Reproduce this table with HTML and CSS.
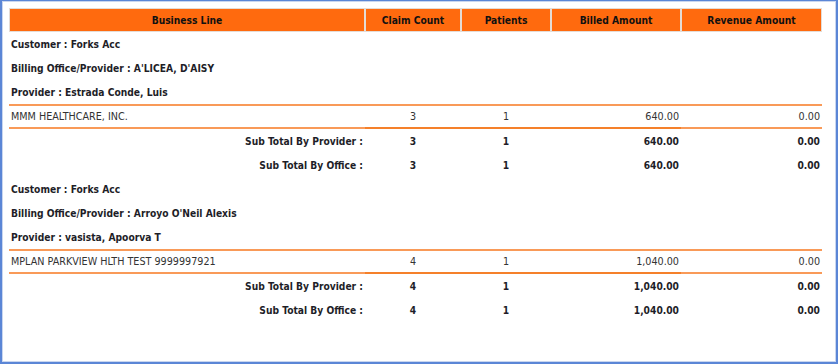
FILE: index.html
```html
<!DOCTYPE html>
<html>
<head>
<meta charset="utf-8">
<link rel="stylesheet" href="styles.css">
</head>
<body>
<div class="frame">
  <table class="report">
    <colgroup>
      <col class="c1"><col class="c2"><col class="c3"><col class="c4"><col class="c5">
    </colgroup>
    <thead>
      <tr>
        <th>Business Line</th>
        <th>Claim Count</th>
        <th>Patients</th>
        <th>Billed Amount</th>
        <th>Revenue Amount</th>
      </tr>
    </thead>
    <tbody>
      <tr class="group"><td colspan="5">Customer : Forks Acc</td></tr>
      <tr class="group"><td colspan="5">Billing Office/Provider : A'LICEA, D'AISY</td></tr>
      <tr class="group"><td colspan="5">Provider : Estrada Conde, Luis</td></tr>
      <tr class="data">
        <td>MMM HEALTHCARE, INC.</td>
        <td class="ctr dk">3</td>
        <td class="ctr dk">1</td>
        <td class="num dk">640.00</td>
        <td class="num">0.00</td>
      </tr>
      <tr class="sub">
        <td class="lbl">Sub Total By Provider :</td>
        <td class="ctr">3</td>
        <td class="ctr">1</td>
        <td class="num">640.00</td>
        <td class="num">0.00</td>
      </tr>
      <tr class="sub">
        <td class="lbl">Sub Total By Office :</td>
        <td class="ctr">3</td>
        <td class="ctr">1</td>
        <td class="num">640.00</td>
        <td class="num">0.00</td>
      </tr>
      <tr class="group"><td colspan="5">Customer : Forks Acc</td></tr>
      <tr class="group"><td colspan="5">Billing Office/Provider : Arroyo O'Neil Alexis</td></tr>
      <tr class="group"><td colspan="5">Provider : vasista, Apoorva T</td></tr>
      <tr class="data">
        <td>MPLAN PARKVIEW HLTH TEST 9999997921</td>
        <td class="ctr dk">4</td>
        <td class="ctr dk">1</td>
        <td class="num dk">1,040.00</td>
        <td class="num">0.00</td>
      </tr>
      <tr class="sub">
        <td class="lbl">Sub Total By Provider :</td>
        <td class="ctr">4</td>
        <td class="ctr">1</td>
        <td class="num">1,040.00</td>
        <td class="num">0.00</td>
      </tr>
      <tr class="sub">
        <td class="lbl">Sub Total By Office :</td>
        <td class="ctr">4</td>
        <td class="ctr">1</td>
        <td class="num">1,040.00</td>
        <td class="num">0.00</td>
      </tr>
    </tbody>
  </table>
</div>
</body>
</html>
```

FILE: styles.css
```css
html, body {
  margin: 0;
  padding: 0;
  background: #ffffff;
}

.frame {
  box-sizing: border-box;
  width: 838px;
  height: 364px;
  border: 2px solid #5b86d6;
  border-top-width: 1px;
  box-shadow: inset 0 0 0 1px #c9d6ef;
  padding: 7px 16px 0 7px;
  font-family: "DejaVu Sans Condensed", "DejaVu Sans", Verdana, sans-serif;
  font-stretch: semi-condensed;
  font-size: 10.2px;
  color: #1e1e28;
}

.report {
  width: 813px;
  table-layout: fixed;
  border-collapse: separate;
  border-spacing: 0;
}

.c1 { width: 356px; }
.c2 { width: 96px; }
.c3 { width: 90px; }
.c4 { width: 130px; }
.c5 { width: 141px; }

.report th {
  background: #ff6a0e;
  border: 1px solid #e4dcd6;
  height: 22px;
  padding: 0;
  font-weight: bold;
  color: #111;
  text-align: center;
}

.report td {
  padding: 0 2px;
  height: 24px;
  white-space: nowrap;
}

.group td {
  font-weight: bold;
}

.data td {
  height: 21px;
  border-top: 2px solid #f99a58;
  border-bottom: 2px solid #f99a58;
  color: #333;
  font-size: 10.7px;
}

.data td.dk {
  border-bottom-color: #f5802a;
}

.sub td {
  font-weight: bold;
}

.lbl {
  text-align: right;
}

.ctr {
  text-align: center;
}

.num {
  text-align: right;
}
```
